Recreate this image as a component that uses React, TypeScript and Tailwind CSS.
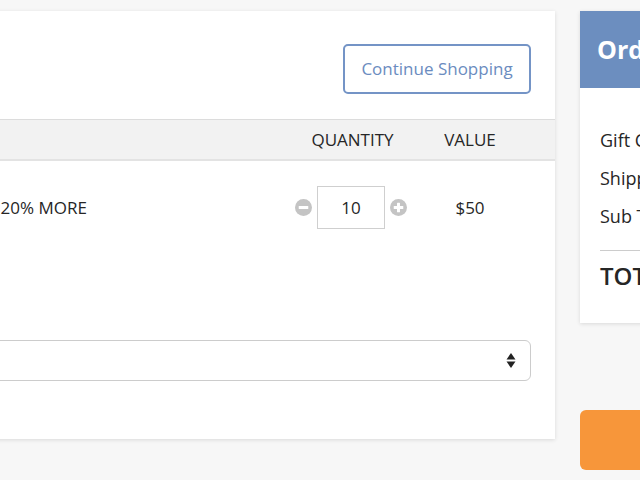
const FONT = { fontFamily: '"Open Sans", "Noto Sans", sans-serif' };

function MinusIcon() {
  return (
    <svg width="17" height="17" viewBox="0 0 16 16" className="shrink-0">
      <circle cx="8" cy="8" r="8" fill="#c4c4c4" />
      <rect x="3.5" y="6.6" width="9" height="2.8" rx="0.5" fill="#fff" />
    </svg>
  );
}

function PlusIcon() {
  return (
    <svg width="17" height="17" viewBox="0 0 16 16" className="shrink-0">
      <circle cx="8" cy="8" r="8" fill="#c4c4c4" />
      <rect x="3.5" y="6.6" width="9" height="2.8" rx="0.5" fill="#fff" />
      <rect x="6.6" y="3.5" width="2.8" height="9" rx="0.5" fill="#fff" />
    </svg>
  );
}

function SelectArrows() {
  return (
    <svg width="10" height="17" viewBox="0 0 10 17">
      <path d="M5 1 L9.5 7.5 H0.5 Z" fill="#222" />
      <path d="M5 16 L9.5 9.5 H0.5 Z" fill="#222" />
    </svg>
  );
}

export default function App() {
  return (
    <div className="w-[640px] h-[480px] overflow-hidden bg-[#f7f7f7] text-[#262626]" style={FONT}>
      <div className="flex gap-[25px] pt-[11px] ml-[-300px]">
        {/* cart */}
        <div className="w-[855px] shrink-0 h-[428px] bg-white shadow-[0_1px_4px_rgba(0,0,0,0.12)] flex flex-col">
          <div className="h-[108px] flex items-start justify-between px-[24px] pt-[33px]">
            <h1 className="text-[26px] font-semibold">Cart</h1>
            <button className="h-[50px] w-[188px] border-2 border-[#7494c6] rounded-[5px] text-[17px] text-[#6b8cc0]">
              Continue Shopping
            </button>
          </div>

          <div className="h-[42px] flex items-center bg-[#f2f2f2] border-t border-[#dcdcdc] border-b-2 border-b-[#e3e3e3] text-[17px] font-medium uppercase">
            <div className="flex-1 pl-[30px]">Item</div>
            <div className="w-[125px] text-center">Quantity</div>
            <div className="w-[110px] text-center">Value</div>
            <div className="w-[30px]" />
          </div>

          <div className="flex items-start pt-[25px]">
            <div className="flex-1 pl-[30px] flex items-start gap-[30px]">
              <div className="w-[205px] h-[110px] rounded bg-[#e9eef6]" />
              <div className="h-[43px] flex items-center text-[17px] font-medium uppercase">
                Get 20% More
              </div>
            </div>
            <div className="w-[125px] flex items-center justify-center gap-[5px] pr-[3px]">
              <MinusIcon />
              <div className="w-[68px] h-[43px] border border-[#cfcfcf] flex items-center justify-center text-[17px]">
                10
              </div>
              <PlusIcon />
            </div>
            <div className="w-[110px] h-[43px] flex items-center justify-center text-[17px]">$50</div>
            <div className="w-[30px]" />
          </div>

          <div className="mt-[44px] mr-[24px] ml-[30px] h-[41px] border border-[#cccccc] rounded-[6px] flex items-center justify-between px-[14px]">
            <span className="text-[17px]">Delivery</span>
            <SelectArrows />
          </div>
        </div>

        {/* summary */}
        <div className="w-[300px] shrink-0 flex flex-col">
          <div className="bg-white shadow-[0_1px_4px_rgba(0,0,0,0.12)]">
            <div className="h-[77px] bg-[#6c8ebf] flex items-center px-[17px]">
              <h2 className="text-[25px] font-bold text-white">Order Summary</h2>
            </div>
            <div className="px-[20px] pt-[39px] pb-[31px]">
              <div className="flex flex-col gap-[12px] text-[18px] font-medium leading-[26px]">
                <div className="flex justify-between"><span>Gift Cards</span><span>$50</span></div>
                <div className="flex justify-between"><span>Shipping</span><span>Free</span></div>
                <div className="flex justify-between"><span>Sub Total</span><span>$50</span></div>
              </div>
              <div className="mt-[21px] border-t border-[#cccccc] pt-[9px] flex justify-between text-[24px] font-semibold leading-[32px]">
                <span>TOTAL</span><span>$50</span>
              </div>
            </div>
          </div>
          <button className="mt-[87px] h-[60px] rounded-[6px] bg-[#f7963a] text-white text-[20px] font-bold">
            Checkout
          </button>
        </div>
      </div>
    </div>
  );
}
